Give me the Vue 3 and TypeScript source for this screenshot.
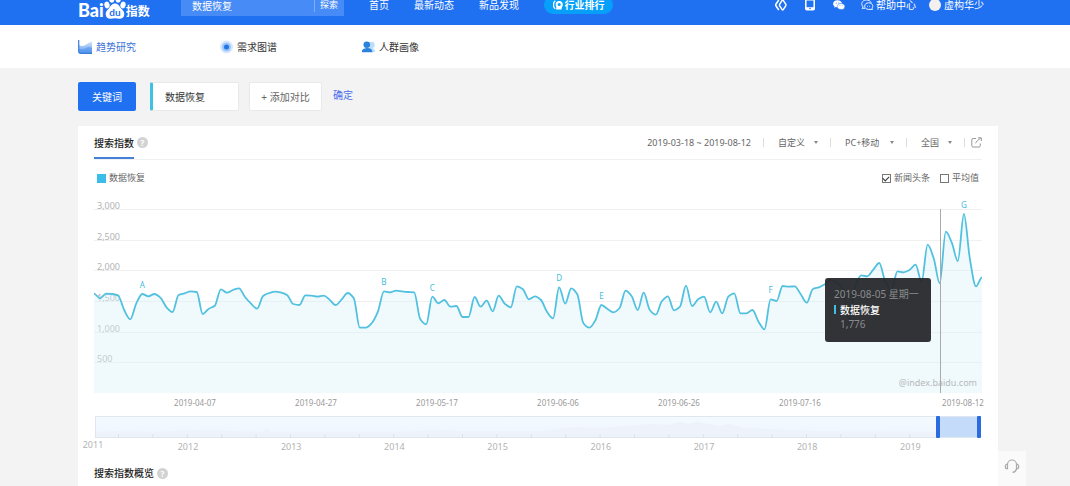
<script setup lang="ts">
import { computed, ref } from 'vue'

const BASE = 184
const WIDTH = 888
const FULL = 552

const samples: number[] = [
  298, 284, 298, 297, 292, 249, 221, 269, 297, 290, 297, 286, 257, 243, 294, 299, 305, 303, 237, 253, 262, 311, 301,
  309, 314, 288, 268, 253, 291, 300, 304, 301, 293, 267, 264, 293, 292, 289, 292, 280, 264, 281, 300, 284, 196, 196,
  210, 244, 305, 302, 307, 305, 303, 302, 222, 206, 289, 269, 279, 259, 261, 228, 228, 288, 259, 277, 245, 292, 268,
  257, 320, 311, 281, 290, 279, 243, 224, 317, 268, 314, 296, 210, 196, 218, 264, 252, 242, 255, 307, 291, 249, 301,
  249, 235, 275, 290, 248, 259, 322, 261, 281, 289, 242, 274, 239, 289, 299, 239, 239, 249, 214, 191, 281, 276, 321,
  319, 320, 296, 271, 312, 317, 326, 339, 331, 312, 221, 319, 353, 350, 370, 390, 334, 309, 365, 362, 369, 385, 334,
  445, 404, 329, 484, 451, 396, 537, 402, 320, 347,
]

const step = WIDTH / (samples.length - 1)
const yOf = (v: number) => BASE - (v / FULL) * BASE

/* Monotone cubic curve: never overshoots a daily value. */
const linePath = computed(() => {
  const ys = samples.map(yOf)
  const slopes = ys.map((y, i) => {
    if (i === 0 || i === ys.length - 1) return 0
    const a = (y - ys[i - 1]) / step
    const b = (ys[i + 1] - y) / step
    return a * b <= 0 ? 0 : (2 * a * b) / (a + b)
  })
  let d = `M0 ${ys[0].toFixed(1)}`
  for (let i = 1; i < ys.length; i++) {
    const x0 = (i - 1) * step
    const x1 = i * step
    const c = step / 3
    d += `C${(x0 + c).toFixed(1)} ${(ys[i - 1] + slopes[i - 1] * c).toFixed(1)} ${(x1 - c).toFixed(1)} ${(ys[i] - slopes[i] * c).toFixed(1)} ${x1.toFixed(1)} ${ys[i].toFixed(1)}`
  }
  return d
})
const areaPath = computed(() => `${linePath.value}V${BASE}H0Z`)

const grid = [3000, 2500, 2000, 1500, 1000, 500].map((v) => ({
  label: v.toLocaleString('en-US'),
  y: Math.round(BASE - (v / 3000) * BASE) + 0.5,
}))

const marks = [
  { name: 'A', day: 8 },
  { name: 'B', day: 48 },
  { name: 'C', day: 56 },
  { name: 'D', day: 77 },
  { name: 'E', day: 84 },
  { name: 'F', day: 112 },
  { name: 'G', day: 144 },
].map((m) => ({ name: m.name, x: m.day * step, y: yOf(samples[m.day]) - 6 }))

const dates = [
  { t: '2019-04-07', x: 101 },
  { t: '2019-04-27', x: 222 },
  { t: '2019-05-17', x: 343 },
  { t: '2019-06-06', x: 464 },
  { t: '2019-06-26', x: 585 },
  { t: '2019-07-16', x: 706 },
  { t: '2019-08-12', x: 869 },
]
const years = [2012, 2013, 2014, 2015, 2016, 2017, 2018, 2019].map((t, i) => ({ t, x: 94 + i * 103.2 }))
const ticks = Array.from({ length: 24 }, (_, i) => 24.5 + i * 34.4)

const keyword = ref('数据恢复')
const showNews = ref(true)
const showMean = ref(false)
</script>

<template>
  <div class="page">
    <header class="top">
      <div class="wrap top-row">
        <a class="logo" href="#">
          <span class="logo-bai">Bai</span>
          <svg class="paw" viewBox="0 0 22 26" aria-hidden="true">
            <g fill="#fff">
              <ellipse cx="3" cy="11" rx="2.6" ry="3.4" transform="rotate(-15 3 11)" />
              <ellipse cx="7.8" cy="5" rx="2.7" ry="3.7" />
              <ellipse cx="14.2" cy="5" rx="2.7" ry="3.7" />
              <ellipse cx="19" cy="11" rx="2.6" ry="3.4" transform="rotate(15 19 11)" />
              <path d="M11 9.500c3 0 4 2.300 5.700 4.400 2 2.200 3.800 3.600 3.600 6.600-.2 3.300-2.800 4.500-5.300 4.200-1.500-.2-2.500-.4-4-.4s-2.500.2-4 .4c-2.500.3-5.100-.9-5.300-4.200-.2-3 1.600-4.400 3.600-6.600C7 11.800 8 9.500 11 9.500z" />
            </g>
            <text x="11" y="22" text-anchor="middle" class="du">du</text>
          </svg>
          <span class="logo-zh">指数</span>
        </a>
        <form class="search" @submit.prevent>
          <input v-model="keyword" type="text" aria-label="搜索词" />
          <button type="submit">探索</button>
        </form>
        <nav class="main-nav">
          <a href="#">首页</a>
          <a href="#">最新动态</a>
          <a href="#">新品发现</a>
          <a href="#" class="pill">
            <svg width="10" height="10" viewBox="0 0 10 10" aria-hidden="true">
              <path d="M2.300.8C-.2 2.500-.2 7 2.300 8.700" fill="none" stroke="#fff" stroke-width="1.300" />
              <circle cx="6.200" cy="4.500" r="2.600" fill="none" stroke="#fff" stroke-width="2" />
              <path d="M3.500 6.500L3 9.500h5.500L9 6.500z" fill="#fff" />
            </svg>行业排行
          </a>
        </nav>
        <div class="tools">
          <a href="#" aria-label="熊掌">
            <svg width="12" height="12" viewBox="0 0 12 12" fill="none" stroke="#fff" stroke-width="1.500">
              <path d="M3.800 1L.9 5.200q-.4.800 0 1.600L3.800 11" />
              <path d="M7.300 1.200L4.700 5.200q-.4.800 0 1.600l2.600 4q.4.400.8 0l2.600-4q.4-.8 0-1.600l-2.600-4q-.4-.4-.8 0z" />
            </svg>
          </a>
          <a href="#" aria-label="手机版">
            <svg width="12" height="12" viewBox="0 0 12 12">
              <rect x="1.800" y="0.800" width="8.400" height="10" rx="1" fill="none" stroke="#fff" stroke-width="1.500" />
              <path d="M2 8.200h8.400v2.600H2z" fill="#fff" />
              <circle cx="6" cy="9.500" r=".8" fill="#1f71f2" />
            </svg>
          </a>
          <a href="#" aria-label="微信">
            <svg width="12" height="12" viewBox="0 0 12 12">
              <path d="M4.500 1.200C2 1.200.1 2.800.1 4.800c0 1 .5 1.900 1.500 2.600l-.4 1.400 1.600-.8q.8.200 1.700.2C7 8.200 8.900 6.700 8.900 4.700S7 1.200 4.500 1.200z" fill="#fff" />
              <path d="M8 4.400c-2.200 0-3.800 1.300-3.800 3s1.600 3.100 3.800 3.100q.7 0 1.300-.2l1.500.8-.4-1.200c.9-.6 1.500-1.400 1.500-2.500 0-1.700-1.700-3-3.900-3z" fill="#fff" stroke="#1f71f2" stroke-width=".5" />
              <g fill="#1f71f2"><circle cx="3.200" cy="3.900" r=".5" /><circle cx="5.800" cy="3.900" r=".5" /><circle cx="6.900" cy="6.700" r=".4" /><circle cx="9.200" cy="6.700" r=".4" /></g>
            </svg>
          </a>
          <a href="#" class="help">
            <svg width="13" height="12" viewBox="0 0 13 12" fill="none" stroke="#fff" stroke-width="0.900">
              <path d="M2.300 8C-.7 5.300 1 1 5.300 1c2.300 0 4.200.9 4.900 2.800" />
              <path d="M7.800 3.800c-2.400 0-4.100 1.300-4.100 3.300s1.700 3.300 4.100 3.300h3.800l-.6-1.200c1.900-2.300.1-5.400-3.200-5.400z" />
              <path d="M6 7.300h.8M8 7.300h.8M2.300 8L1 9.300h3" />
            </svg>帮助中心
          </a>
          <a href="#" class="user"><span class="avatar"></span>虚构华少</a>
        </div>
      </div>
    </header>

    <nav class="sub">
      <div class="wrap sub-row">
        <a href="#" class="active">
          <svg width="15" height="14" viewBox="0 0 15 14" aria-hidden="true">
            <defs>
              <linearGradient id="trend" x1="0" y1="0" x2="0" y2="1"><stop offset="0" stop-color="#d6e7fc" /><stop offset="1" stop-color="#5a9bef" /></linearGradient>
            </defs>
            <path d="M1 4.500Q4 7.500 8 4.500q3-2 6-3V13H1z" fill="url(#trend)" />
            <path d="M1 9q4 1 7-1t6 0v5H1z" fill="#4b8eea" opacity=".5" />
            <path d="M.7 0v11.300q0 2 2 2H14" fill="none" stroke="#3b7dd8" stroke-width="1.200" />
          </svg>趋势研究
        </a>
        <a href="#">
          <svg width="14" height="14" viewBox="0 0 14 14" aria-hidden="true">
            <circle cx="6.500" cy="7" r="6.500" fill="#d9e8fd" /><circle cx="6.500" cy="7" r="4.500" fill="#9cc5f9" /><circle cx="6.500" cy="7" r="2.500" fill="#2475e4" />
          </svg>需求图谱
        </a>
        <a href="#">
          <svg width="14" height="14" viewBox="0 0 14 14" aria-hidden="true">
            <circle cx="9.500" cy="5" r="3.200" fill="#bcdefc" /><path d="M6 12q0-4 3.500-4t3.500 4z" fill="#bcdefc" />
            <circle cx="4.800" cy="4.800" r="3.300" fill="#2a82dc" /><path d="M-.5 12.300q0-4 5.300-4.300t5.700 4.300z" fill="#2a82dc" />
          </svg>人群画像
        </a>
      </div>
    </nav>

    <main class="wrap">
      <div class="keywords">
        <button type="button" class="kw-main">关键词</button>
        <button type="button" class="kw-word">数据恢复</button>
        <button type="button" class="kw-add">+ 添加对比</button>
        <a href="#" class="kw-ok">确定</a>
      </div>

      <section class="panel">
        <div class="head">
          <h2 class="tab">搜索指数</h2><span class="q">?</span>
          <div class="filters">
            <span class="range">2019-03-18 ~ 2019-08-12</span>
            <i class="bar"></i>
            <span class="pick p1"><select aria-label="时间"><option>自定义</option></select></span>
            <i class="bar"></i>
            <span class="pick p2"><select aria-label="设备"><option>PC+移动</option></select></span>
            <i class="bar"></i>
            <span class="pick p3"><select aria-label="地区"><option>全国</option></select></span>
            <i class="bar last"></i>
            <a href="#" class="share" aria-label="分享">
              <svg width="11" height="11" viewBox="0 0 11 11" fill="none" stroke="#999" stroke-width="1">
                <path d="M5 1.500H2q-1.200 0-1.200 1.200v6q0 1.300 1.200 1.300h6q1.300 0 1.300-1.300V6.500M4.500 6.300Q6 3 9.800 1.300M7 .8h3.300V4" />
              </svg>
            </a>
          </div>
        </div>

        <div class="legend">
          <span class="key">数据恢复</span>
          <span class="checks">
            <label><input v-model="showNews" type="checkbox" />新闻头条</label>
            <label><input v-model="showMean" type="checkbox" />平均值</label>
          </span>
        </div>

        <div class="chart">
          <svg class="plot" viewBox="0 -13 888 214" role="img" aria-label="搜索指数趋势">
            <defs>
              <linearGradient id="brush-bg" x1="0" y1="0" x2="0" y2="1"><stop offset="0" stop-color="#f3faff" /><stop offset="1" stop-color="#f0f5fe" /></linearGradient>
            </defs>
            <g v-for="g in grid" :key="g.label">
              <line x1="0" x2="888" :y1="g.y" :y2="g.y" stroke="#f0f0f0" />
              <text x="3" :y="g.y - 0.5" class="axis">{{ g.label }}</text>
            </g>
            <path :d="areaPath" fill="#d9f2fa" fill-opacity=".4" />
            <text x="883" y="177" text-anchor="end" class="mark">@index.baidu.com</text>
            <path :d="linePath" fill="none" stroke="#52c1df" stroke-width="1.800" stroke-linejoin="round" />
            <line x1="846.500" x2="846.500" y1="0" y2="184" stroke="#aaa" />
            <text v-for="m in marks" :key="m.name" :x="m.x" :y="m.y" text-anchor="middle" class="flag">{{ m.name }}</text>
            <text v-for="d in dates" :key="d.t" :x="d.x" y="197" text-anchor="middle" class="date">{{ d.t }}</text>
          </svg>
          <div class="tip">
            <div class="tip-date">2019-08-05 星期一</div>
            <div class="tip-name">数据恢复</div>
            <div class="tip-num">1,776</div>
          </div>
        </div>

        <svg class="brush" viewBox="0 0 888 42" role="img" aria-label="时间范围">
          <rect x="1.500" y="6.500" width="885" height="21" fill="url(#brush-bg)" stroke="#dfe6ee" />
          <path d="M2 27V22L20 21 60 22 100 20 170 22 172 18 176 22 300 22 350 20 360 21 450 21 480 17 510 18 530 16 560 14 575 15 586 12 594 14 604 12 625 16 635 14 650 18 720 21 842 22V27z" fill="#edf2fb" />
          <line v-for="x in ticks" :key="x" :x1="x" :x2="x" y1="24" y2="28" stroke="#dde2e8" />
          <rect x="844" y="7" width="40" height="20" fill="#c5dbfa" />
          <rect x="842" y="6" width="4" height="22" rx="1" fill="#2a6be0" />
          <rect x="883" y="6" width="4" height="22" rx="1" fill="#2a6be0" />
          <text x="-1" y="38" text-anchor="middle" class="year">2011</text>
          <text v-for="y in years" :key="y.t" :x="y.x" y="40" text-anchor="middle" class="year">{{ y.t }}</text>
        </svg>

        <div class="overview"><h2>搜索指数概览</h2><span class="q">?</span></div>
      </section>
    </main>

    <button type="button" class="service" aria-label="在线客服">
      <svg width="16" height="16" viewBox="0 0 16 16" fill="none" stroke="#aaa" stroke-width="1.200">
        <path d="M3.500 11V6.500a4.500 4.500 0 0 1 9 0v4.500q-.8 3-4 3.400" />
        <path d="M3.500 6Q1.300 6.300 1.300 8.500t2.200 2.500M12.500 6q2.200.3 2.200 2.500t-2.200 2.500" />
      </svg>
    </button>
  </div>
</template>

<style>
body {
  margin: 0;
  background: #f3f3f3;
}
</style>

<style scoped>
.page {
  position: relative;
  height: 100vh;
  overflow: hidden;
  background: #f3f3f3;
  color: #333;
  font-family: "Noto Sans", "Noto Sans CJK SC", sans-serif;
  font-size: 10px;
  line-height: 14px;
}
.page * {
  box-sizing: border-box;
}
a {
  color: inherit;
  text-decoration: none;
}
button,
input,
select {
  font: inherit;
  color: inherit;
  margin: 0;
  padding: 0;
  border: 0;
  background: none;
}
svg {
  flex: none;
}
.wrap {
  max-width: 920px;
  margin: 0 auto;
  position: relative;
  left: 3px;
}
.top {
  height: 25px;
  overflow: hidden;
  background: #1f71f2;
  color: #fff;
  line-height: 10px;
}
.top-row {
  display: flex;
  align-items: center;
  height: 26px;
  margin-top: -8px;
}
.logo {
  display: flex;
  align-items: center;
  width: 103px;
  font-weight: 700;
}
.logo-bai {
  font-family: Lato, sans-serif;
  font-size: 18px;
  font-weight: 900;
  line-height: 20px;
  padding-top: 10px;
}
.paw {
  width: 22px;
  height: 26px;
  margin-top: 4px;
}
.du {
  font: 700 10px Lato, sans-serif;
  fill: #1f71f2;
}
.logo-zh {
  font-size: 12px;
  padding-top: 14px;
}
.search {
  display: flex;
  width: 163px;
  height: 22px;
  background: #478bf6;
}
.search input {
  flex: 1;
  min-width: 0;
  padding-left: 11px;
  outline: none;
}
.search button {
  width: 30px;
  font-size: 9px;
  position: relative;
}
.search button::before {
  content: "";
  position: absolute;
  left: 0;
  top: 4px;
  bottom: 4px;
  border-left: 1px solid #7eaff9;
}
.main-nav {
  display: flex;
  align-items: center;
  gap: 25px;
  margin-left: 25px;
}
.pill {
  display: flex;
  align-items: center;
  justify-content: center;
  gap: 2px;
  width: 69px;
  height: 18px;
  border-radius: 9px;
  background: #06a0fb;
  font-weight: 700;
}
.tools {
  display: flex;
  align-items: center;
  gap: 17px;
  margin-left: auto;
  padding-right: 14px;
}
.tools a {
  display: flex;
  align-items: center;
}
.help {
  gap: 2px;
  margin-left: -1px;
}
.user {
  gap: 3px;
  margin-left: -4px;
}
.avatar {
  width: 12px;
  height: 12px;
  border-radius: 50%;
  background: #f4f0ef;
}
.sub {
  height: 43px;
  background: #fff;
}
.sub-row {
  display: flex;
  height: 43px;
}
.sub-row a {
  display: flex;
  align-items: center;
  gap: 3px;
  width: 142px;
}
.sub-row .active {
  color: #3b73d9;
}
.keywords {
  display: flex;
  height: 29px;
  margin: 14px 0 15px;
}
.kw-main {
  width: 58px;
  border-radius: 2px;
  background: #1f71f2;
  color: #fff;
}
.kw-word,
.kw-add {
  background: #fff;
  border: 1px solid #e9e9e9;
  border-radius: 2px;
}
.kw-word {
  width: 89px;
  margin-left: 14px;
  padding-left: 12px;
  border-left: 3px solid #3fc1e3;
  text-align: left;
}
.kw-add {
  width: 73px;
  margin-left: 10px;
  color: #666;
}
.kw-ok {
  margin-left: 11px;
  padding-top: 6px;
  color: #4a6df0;
}
.panel {
  padding: 0 16px;
  background: #fff;
}
.head {
  display: flex;
  align-items: center;
  height: 34px;
  border-bottom: 1px solid #f0f0f0;
}
h2 {
  margin: 0;
  font-size: 10px;
  font-weight: 500;
  color: #222;
}
.tab {
  height: 33px;
  line-height: 34px;
  border-bottom: 2px solid #4380d8;
}
.q {
  width: 11px;
  height: 11px;
  margin-left: 3px;
  border-radius: 50%;
  background: #d2d2d2;
  color: #fff;
  font-size: 8px;
  font-weight: 700;
  line-height: 11px;
  text-align: center;
}
.filters {
  display: flex;
  align-items: center;
  margin-left: auto;
  font-size: 9px;
  color: #666;
}
.bar {
  width: 1px;
  height: 9px;
  margin: 0 14px 0 12px;
  background: #ddd;
}
.bar.last {
  margin: 0 6px 0 12px;
}
.pick {
  display: flex;
  align-items: center;
}
.pick::after {
  content: "";
  margin-left: auto;
  border: 2px solid transparent;
  border-top: 3px solid #888;
  border-bottom: 0;
}
.pick select {
  appearance: none;
  outline: none;
}
.p1 {
  width: 40px;
}
.p2 {
  width: 49px;
}
.p3 {
  width: 31px;
}
.share {
  display: flex;
}
.legend {
  display: flex;
  align-items: center;
  justify-content: space-between;
  height: 36px;
  padding: 0 3px;
  font-size: 9px;
  color: #666;
}
.key {
  display: flex;
  align-items: center;
  gap: 3px;
}
.key::before {
  content: "";
  width: 9px;
  height: 9px;
  background: #3bbdec;
}
.checks {
  display: flex;
  gap: 10px;
}
.checks label {
  display: flex;
  align-items: center;
  gap: 3px;
}
.checks input {
  appearance: none;
  width: 9px;
  height: 9px;
  border: 1px solid #777;
  display: grid;
  place-items: center;
}
.checks input:checked::before {
  content: "";
  width: 5px;
  height: 3px;
  border-left: 1px solid #333;
  border-bottom: 1px solid #333;
  transform: rotate(-45deg);
}
.chart {
  position: relative;
}
.plot,
.brush {
  display: block;
  width: 100%;
  overflow: visible;
}
.axis,
.year {
  font-size: 9px;
  fill: #b3b3b3;
}
.mark {
  font-size: 9px;
  fill: #b5b9ba;
}
.flag {
  font-size: 8px;
  fill: #45bcdb;
}
.date {
  font-size: 8px;
  fill: #999;
}
.tip {
  position: absolute;
  top: 82px;
  right: 51px;
  width: 106px;
  height: 64px;
  padding: 9px;
  border-radius: 3px;
  background: rgba(38, 40, 43, 0.95);
  color: #8b8c8e;
}
.tip-date {
  white-space: nowrap;
}
.tip-name {
  display: flex;
  align-items: center;
  gap: 4px;
  height: 17px;
  color: #fff;
  font-weight: 500;
}
.tip-name::before {
  content: "";
  width: 2px;
  height: 9px;
  background: #3fc1e3;
}
.tip-num {
  padding-left: 6px;
  line-height: 12px;
}
.overview {
  display: flex;
  align-items: center;
  height: 34px;
  padding-top: 8px;
}
.service {
  position: absolute;
  left: calc(50% + 463px);
  bottom: 0;
  width: 28px;
  height: 35px;
  padding-bottom: 6px;
  background: #fafafa;
}
.service svg {
  display: block;
  margin: 0 auto;
}
</style>
